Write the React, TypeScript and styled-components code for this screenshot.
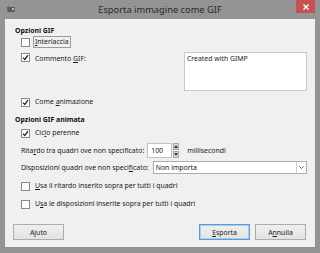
import React from "react";
import styled, { createGlobalStyle } from "styled-components";

const Global = createGlobalStyle`
  html, body { margin: 0; padding: 0; background: #949494; }
  body { width: 320px; height: 253px; overflow: hidden; }
  * { box-sizing: border-box; }
`;

const Window = styled.div`
  width: 320px;
  height: 253px;
  background: #949494;
  display: flex;
  flex-direction: column;
  font-family: "Noto Sans", "Open Sans", sans-serif;
  color: #1a1a1a;
`;

const TitleBar = styled.div`
  height: 19px;
  display: flex;
  align-items: flex-start;
  position: relative;
`;

const AppIcon = styled.svg`
  position: absolute;
  left: 6px;
  top: 4px;
`;

const Title = styled.div`
  flex: 1;
  text-align: center;
  font-size: 9.3px;
  line-height: 19px;
  color: #2a2a2a;
`;

const CloseBtn = styled.div`
  position: absolute;
  right: 5px;
  top: 0;
  width: 19px;
  height: 13px;
  background: #c75050;
  display: flex;
  align-items: center;
  justify-content: center;
`;

const Body = styled.div`
  margin: 0 5px 6px 5px;
  flex: 1;
  background: #f0f0f0;
  display: flex;
  flex-direction: column;
  padding: 0 8px 0 10px;
  font-size: 6.9px;
`;

const Heading = styled.div<{ $mt: number }>`
  margin-top: ${(p) => p.$mt}px;
  height: 10px;
  line-height: 10px;
  font-weight: 700;
  color: #111;
`;

const Row = styled.div<{ $mt: number; $h?: number }>`
  margin-top: ${(p) => p.$mt}px;
  height: ${(p) => p.$h ?? 10}px;
  display: flex;
  align-items: center;
  padding-left: 6px;
  gap: 3px;
  white-space: nowrap;
`;

const TopRow = styled(Row)`
  align-items: flex-start;
`;

const Box = styled.span`
  width: 9px;
  height: 9px;
  flex: none;
  background: #fff;
  border: 1px solid #8a8a8a;
  display: inline-flex;
  align-items: center;
  justify-content: center;
`;

const Label = styled.span<{ $focus?: boolean }>`
  line-height: 10px;
  padding: 0 1px;
  border: 1px solid ${(p) => (p.$focus ? "#9a9a9a" : "transparent")};
`;

const U = styled.span`
  text-decoration: underline;
  text-underline-offset: 1px;
`;

const Check = () => (
  <svg width="7" height="7" viewBox="0 0 7 7">
    <path d="M1 3.6 L2.8 5.4 L6 1.2" stroke="#222" strokeWidth="1.3" fill="none" />
  </svg>
);

const CheckBox = ({ checked }: { checked?: boolean }) => <Box>{checked && <Check />}</Box>;

const TextArea = styled.div`
  margin-left: auto;
  margin-top: -1px;
  width: 123px;
  height: 39px;
  background: #fff;
  border: 1px solid #c9c9c9;
  padding: 1px 2px;
  line-height: 9px;
`;

const Field = styled.div`
  width: 25px;
  height: 15px;
  background: #fff;
  border: 1px solid #c2c2c2;
  display: flex;
  align-items: center;
  padding-left: 3px;
`;

const Spin = styled.div`
  width: 6px;
  height: 15px;
  display: flex;
  flex-direction: column;
  gap: 1px;
  margin-left: -2px;
  margin-right: 5px;
`;

const SpinBtn = styled.div`
  flex: 1;
  background: #dcdcdc;
  border: 1px solid #a8a8a8;
  display: flex;
  align-items: center;
  justify-content: center;
`;

const Combo = styled.div`
  margin-left: 1px;
  width: 154px;
  height: 13px;
  background: #fff;
  border: 1px solid #acacac;
  display: flex;
  align-items: center;
`;

const ComboText = styled.span`
  flex: 1;
  padding-left: 2px;
`;

const ComboArrow = styled.span`
  width: 10px;
  height: 100%;
  border-left: 1px solid #d0d0d0;
  display: flex;
  align-items: center;
  justify-content: center;
`;

const Buttons = styled.div`
  margin-top: auto;
  margin-bottom: 7px;
  display: flex;
  align-items: center;
  margin-left: -2px;
`;

const Button = styled.div<{ $default?: boolean; $ml?: number }>`
  width: 51px;
  height: 16px;
  margin-left: ${(p) => p.$ml ?? 0}px;
  background: linear-gradient(#efefef, #e3e3e3);
  border: 1px solid ${(p) => (p.$default ? "#5d9ad6" : "#adadad")};
  box-shadow: ${(p) => (p.$default ? "inset 0 0 0 1px #a9cdef" : "none")};
  display: flex;
  align-items: center;
  justify-content: center;
`;

export default function App() {
  return (
    <>
      <Global />
      <Window>
        <TitleBar>
          <AppIcon width="10" height="9" viewBox="0 0 10 9">
            <path d="M1 3 L9 3 L8.5 8 L1.5 8 Z" fill="#5a5a5a" />
            <path d="M2 1 L4 3 L3 3 Z" fill="#6a6a6a" />
            <circle cx="7" cy="5" r="1" fill="#ddd" />
          </AppIcon>
          <Title>Esporta immagine come GIF</Title>
          <CloseBtn>
            <svg width="6" height="6" viewBox="0 0 6 6">
              <path d="M0.5 0.5 L5.5 5.5 M5.5 0.5 L0.5 5.5" stroke="#fff" strokeWidth="1.4" />
            </svg>
          </CloseBtn>
        </TitleBar>
        <Body>
          <Heading $mt={7}>Opzioni GIF</Heading>
          <Row $mt={1}>
            <CheckBox />
            <Label $focus>
              <U>I</U>nterlaccia
            </Label>
          </Row>
          <TopRow $mt={6} $h={40}>
            <CheckBox checked />
            <Label>
              Commento <U>G</U>IF:
            </Label>
            <TextArea>Created with GIMP</TextArea>
          </TopRow>
          <Row $mt={4}>
            <CheckBox checked />
            <Label>
              Come <U>a</U>nimazione
            </Label>
          </Row>
          <Heading $mt={8}>Opzioni GIF animata</Heading>
          <Row $mt={3}>
            <CheckBox checked />
            <Label>
              Cic<U>l</U>o perenne
            </Label>
          </Row>
          <Row $mt={4} $h={16}>
            <span>
              Rita<U>r</U>do tra quadri ove non specificato:
            </span>
            <Field>100</Field>
            <Spin>
              <SpinBtn>
                <svg width="4" height="3" viewBox="0 0 4 3">
                  <path d="M0 3 L2 0 L4 3 Z" fill="#333" />
                </svg>
              </SpinBtn>
              <SpinBtn>
                <svg width="4" height="3" viewBox="0 0 4 3">
                  <path d="M0 0 L2 3 L4 0 Z" fill="#333" />
                </svg>
              </SpinBtn>
            </Spin>
            <span>millisecondi</span>
          </Row>
          <Row $mt={3} $h={13}>
            <span>
              Disposizioni quadri ove non speci<U>f</U>icato:
            </span>
            <Combo>
              <ComboText>Non importa</ComboText>
              <ComboArrow>
                <svg width="5" height="3" viewBox="0 0 5 3">
                  <path d="M0.3 0.3 L2.5 2.6 L4.7 0.3" stroke="#555" strokeWidth="0.9" fill="none" />
                </svg>
              </ComboArrow>
            </Combo>
          </Row>
          <Row $mt={7}>
            <CheckBox />
            <Label>
              <U>U</U>sa il ritardo inserito sopra per tutti i quadri
            </Label>
          </Row>
          <Row $mt={8}>
            <CheckBox />
            <Label>
              U<U>s</U>a le disposizioni inserite sopra per tutti i quadri
            </Label>
          </Row>
          <Buttons>
            <Button>Ajuto</Button>
            <Button $default $ml={135}>
              <U>E</U>sporta
            </Button>
            <Button $ml={5}>
              A<U>n</U>nulla
            </Button>
          </Buttons>
        </Body>
      </Window>
    </>
  );
}
